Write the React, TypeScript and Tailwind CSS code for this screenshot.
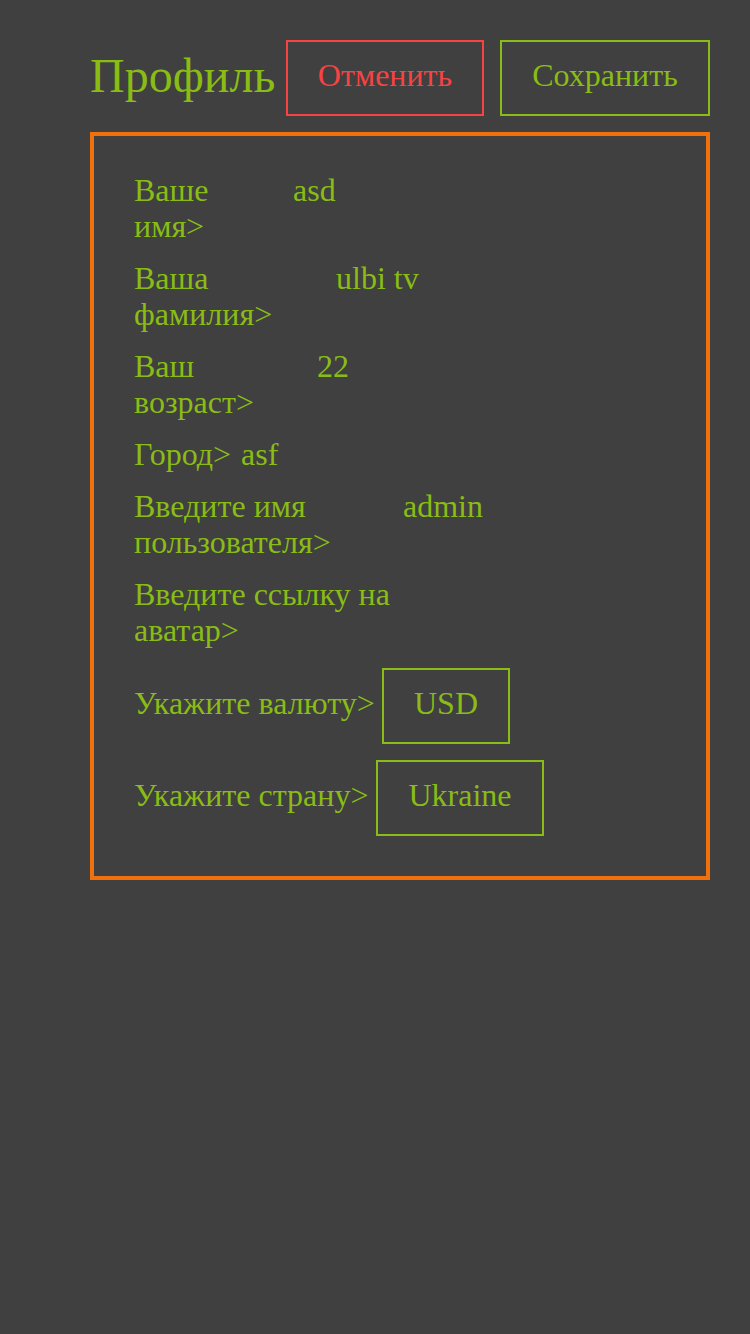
import React from "react";

const fields = [
  { label: "Ваше имя>", value: "asd", w: "w-[151px]" },
  { label: "Ваша фамилия>", value: "ulbi tv", w: "w-[194px]" },
  { label: "Ваш возраст>", value: "22", w: "w-[175px]" },
  { label: "Город>", value: "asf", w: "w-[99px]" },
  { label: "Введите имя пользователя>", value: "admin", w: "w-[261px]" },
  { label: "Введите ссылку на аватар>", value: "", w: "w-[262px]" },
];

export default function App() {
  return (
    <div className="min-h-screen w-full bg-[#404040] font-['Liberation_Serif','Noto_Sans_CJK_SC',serif] text-[#89bc14]">
      <div className="pl-[90px] pr-[40px] pt-[40px]">
        <div className="flex items-start">
          <h1 className="mt-[8px] text-[48px] leading-[normal] text-[#89bc14]">Профиль</h1>
          <div className="ml-auto flex gap-4">
            <button className="flex h-[76px] w-[198px] items-start justify-center border-2 border-[#f84343] pt-[15px] text-[32px] leading-[36px] text-[#f84343]">
              Отменить
            </button>
            <button className="flex h-[76px] w-[210px] items-start justify-center border-2 border-[#89bc14] pt-[15px] text-[32px] leading-[36px] text-[#89bc14]">
              Сохранить
            </button>
          </div>
        </div>

        <div className="mt-4 border-4 border-[#f0700c] px-[40px] pt-[36px] pb-[40px] text-[32px] leading-[36px]">
          <div className="flex flex-col gap-4">
            {fields.map((f) => (
              <div key={f.label} className="flex items-start gap-2">
                <label className={`${f.w} shrink-0 whitespace-normal`}>{f.label}</label>
                <input
                  readOnly
                  value={f.value}
                  className="h-[36px] min-w-0 flex-1 bg-transparent p-0 text-[32px] leading-[36px] text-[#89bc14] outline-none"
                />
              </div>
            ))}
            <div className="mt-[4px] flex items-baseline gap-2">
              <span className="w-[240px] shrink-0 whitespace-nowrap">Укажите валюту&gt;</span>
              <div className="h-[76px] w-[128px] border-2 border-[#89bc14] pt-[15px] text-center">USD</div>
            </div>
            <div className="flex items-baseline gap-2">
              <span className="w-[234px] shrink-0 whitespace-nowrap">Укажите страну&gt;</span>
              <div className="h-[76px] w-[168px] border-2 border-[#89bc14] pt-[15px] text-center">Ukraine</div>
            </div>
          </div>
        </div>
      </div>
    </div>
  );
}
